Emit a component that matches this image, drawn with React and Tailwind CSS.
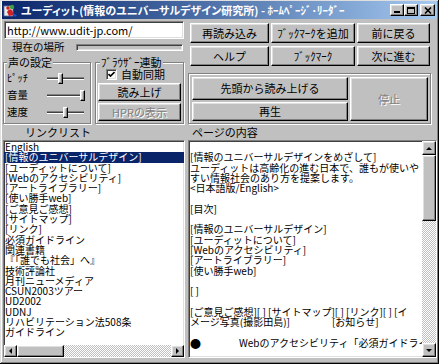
import React from 'react';

const raised =
  'border border-t-white border-l-white border-r-black border-b-black shadow-[inset_-1px_-1px_#808080,inset_1px_1px_#dfdfdf]';
const sunken =
  'border border-t-[#808080] border-l-[#808080] border-r-white border-b-white shadow-[inset_1px_1px_#404040,inset_-1px_-1px_#dfdfdf]';
const etched = 'border border-[#808080] shadow-[1px_1px_0_#fff,inset_1px_1px_0_#fff]';
const dither = 'bg-[repeating-conic-gradient(#ffffff_0%_25%,#c0c0c0_0%_50%)] bg-[length:2px_2px]';

const Btn = ({ className = '', disabled, children }) => (
  <button
    className={`${raised} bg-[#c0c0c0] flex items-center justify-center text-[11px] leading-none whitespace-nowrap ${
      disabled ? 'text-[#808080] [text-shadow:1px_1px_0_#fff]' : 'text-black'
    } ${className}`}
  >
    {children}
  </button>
);

const Arrow = ({ dir }) => {
  const pts = {
    up: '1,4 4,1 7,4',
    down: '1,1 4,4 7,1',
    left: '4,1 1,4 4,7',
    right: '1,1 4,4 1,7',
  }[dir];
  const vertical = dir === 'up' || dir === 'down';
  return (
    <svg width={vertical ? 8 : 5} height={vertical ? 5 : 8} viewBox={vertical ? '0 0 8 5' : '0 0 5 8'}>
      <polygon points={pts} fill="#000" />
    </svg>
  );
};

const Slider = ({ pos, className = '' }) => (
  <div className={`relative h-[17px] ${className}`}>
    <div className="absolute left-0 right-0 top-[7px] h-[3px] border-t border-t-[#808080] border-b border-b-white bg-[#404040]" />
    <div className={`absolute top-[3px] w-[5px] h-[11px] bg-[#c0c0c0] ${raised}`} style={{ left: pos }} />
  </div>
);

const TitleIcon = () => (
  <svg width="15" height="15" viewBox="0 0 15 15">
    <rect x="1" y="3" width="9" height="10" fill="#e8e8e8" stroke="#6070a0" strokeWidth="0.8" />
    <circle cx="9" cy="4" r="2.2" fill="#3aa040" />
    <path d="M4 9 Q6 5 9 7 L11 12 L6 13 Z" fill="#d02020" />
    <circle cx="5" cy="5" r="1.8" fill="#d02020" />
    <path d="M9 10 L14 12 L12 14 Z" fill="#2050c0" />
  </svg>
);

const linkItems = [
  'English',
  '[情報のユニバーサルデザイン]',
  '[ユーディットについて]',
  '[Webのアクセシビリティ]',
  '[アートライブラリー]',
  '[使い勝手web]',
  '[ご意見ご感想]',
  '[サイトマップ]',
  '[リンク]',
  '必須ガイドライン',
  '関連書籍',
  '『「誰でも社会」へ』',
  '技術評論社',
  '月刊ニューメディア',
  'CSUN2003ツアー',
  'UD2002',
  'UDNJ',
  'リハビリテーション法508条',
  'ガイドライン',
];

const pageLines = [
  '',
  '[情報のユニバーサルデザインをめざして]',
  'ユーディットは高齢化の進む日本で、誰もが使いや',
  'すい情報社会のあり方を提案します。',
  '<日本語版/English>',
  '',
  '[目次]',
  '',
  '[情報のユニバーサルデザイン]',
  '[ユーディットについて]',
  '[Webのアクセシビリティ]',
  '[アートライブラリー]',
  '[使い勝手web]',
  '',
  '[ ]',
  '',
  '[ご意見ご感想][ ] [サイトマップ][ ] [リンク][ ] [イ',
];

export default function App() {
  return (
    <div className="w-[439px] h-[364px] bg-[#c0c0c0] flex flex-col px-[2px] pt-[1px] overflow-hidden shadow-[inset_-1px_-1px_#000,inset_1px_1px_#dfdfdf,inset_-2px_-2px_#808080,inset_2px_2px_#fff] font-['Noto_Sans_CJK_JP','Noto_Sans',sans-serif] text-black">
      {/* Title bar */}
      <div className="h-[18px] flex items-center bg-gradient-to-r from-[#0a246a] to-[#a6caf0] px-[1px]">
        <TitleIcon />
        <span className="ml-[3px] text-white font-bold text-[11px] leading-none whitespace-nowrap [font-feature-settings:'palt']">
          ユーディット(情報のユニバーサルデザイン研究所) - ﾎｰﾑﾍﾟｰｼﾞ･ﾘｰﾀﾞｰ
        </span>
        <div className="ml-auto flex items-center pr-[1px]">
          <button className={`${raised} bg-[#c0c0c0] w-[14px] h-[12px] flex items-end justify-center pb-[2px]`}>
            <div className="w-[6px] h-[2px] bg-black" />
          </button>
          <button className={`${raised} bg-[#c0c0c0] w-[14px] h-[12px] flex items-center justify-center`}>
            <div className="w-[8px] h-[7px] border border-black border-t-2" />
          </button>
          <button className={`${raised} bg-[#c0c0c0] w-[15px] h-[12px] ml-[2px] flex items-center justify-center`}>
            <svg width="8" height="7" viewBox="0 0 8 7">
              <path d="M1 0.5 L7 6.5 M7 0.5 L1 6.5" stroke="#000" strokeWidth="1.6" />
            </svg>
          </button>
        </div>
      </div>

      {/* Upper controls */}
      <div className="flex">
        <div className="w-[182px] ml-[1px] flex flex-col">
          <div className={`${sunken} bg-white mt-[2px] ml-[1px] w-[180px] h-[18px] flex items-center px-[2px] text-[11px] leading-none`}>
            http://www.udit-jp.com/
          </div>
          <div className="mt-[2px] h-[12px] flex items-center">
            <span className="pl-[9px] w-[73px] text-[10.5px] leading-none">現在の場所</span>
            <div className={`${sunken} w-[107px] h-[7px] bg-[#c0c0c0]`} />
          </div>
          <div className="mt-[9px] h-[62px] flex gap-[4px]">
            <div className={`relative ${etched} w-[88px] h-full flex flex-col pt-[7px]`}>
              <span className="absolute -top-[7px] left-[3px] px-[1px] bg-[#c0c0c0] text-[11px] leading-[13px]">声の設定</span>
              {[
                ['ﾋﾟｯﾁ', 11],
                ['音量', 33],
                ['速度', 16],
              ].map(([label, pos]) => (
                <div key={label} className="flex items-center h-[17px]">
                  <span className="pl-[3px] w-[43px] text-[10.5px] leading-none">{label}</span>
                  <Slider pos={pos} className="w-[37px]" />
                </div>
              ))}
            </div>
            <div className={`relative ${etched} w-[89px] h-full flex flex-col pt-[5px] pl-[2px]`}>
              <span className="absolute -top-[7px] left-[4px] px-[1px] bg-[#c0c0c0] text-[11px] leading-[13px]">ﾌﾞﾗｳｻﾞｰ連動</span>
              <div className="h-[12px] flex items-center pl-[8px] gap-[4px]">
                <div className={`${sunken} w-[11px] h-[11px] bg-white flex items-center justify-center`}>
                  <svg width="7" height="7" viewBox="0 0 7 7">
                    <path d="M0.5 3 L2.5 5 L6.5 1" stroke="#000" strokeWidth="1.6" fill="none" />
                  </svg>
                </div>
                <span className="text-[11px] leading-none">自動同期</span>
              </div>
              <Btn className="mt-[3px] w-[83px] h-[18px]">読み上げ</Btn>
              <Btn className="mt-[2px] w-[83px] h-[18px]" disabled>HPRの表示</Btn>
            </div>
          </div>
        </div>

        <div className="ml-[3px] w-[249px] flex flex-col">
          <div className="mt-[4px] ml-[2px] grid grid-cols-[79px_84px_73px] grid-rows-[20px_20px] gap-[2px] gap-y-[3px]">
            <Btn>再読み込み</Btn>
            <Btn>ﾌﾞｯｸﾏｰｸを追加</Btn>
            <Btn>前に戻る</Btn>
            <Btn>ヘルプ</Btn>
            <Btn>ﾌﾞｯｸﾏｰｸ</Btn>
            <Btn>次に進む</Btn>
          </div>
          <div className={`${etched} mt-[7px] w-[243px] h-[51px] flex gap-[2px] pt-[3px] pl-[3px] pr-[2px]`}>
            <div className="w-[156px] flex flex-col gap-[2px]">
              <Btn className="h-[23px]">先頭から読み上げる</Btn>
              <Btn className="h-[19px]">再生</Btn>
            </div>
            <Btn className="flex-1 h-[44px]" disabled>停止</Btn>
          </div>
        </div>
      </div>

      {/* Labels */}
      <div className="h-[16px] flex items-center text-[11px] leading-none">
        <span className="w-[186px] pl-[23px]">リンクリスト</span>
        <span className="pl-[4px]">ページの内容</span>
      </div>

      {/* Lists */}
      <div className="flex h-[218px]">
        <div className={`${sunken} ml-[1px] w-[182px] h-full bg-white flex flex-col`}>
          <div className="flex-1 overflow-hidden pt-[1px] text-[10px] leading-[10.3px]">
            {linkItems.map((item, i) => (
              <div
                key={item}
                className={`whitespace-nowrap pl-[1px] ${i === 1 ? 'bg-[#0a246a] text-white' : ''}`}
              >
                {item}
              </div>
            ))}
          </div>
          <div className="h-[12px] flex">
            <div className={`${raised} bg-[#c0c0c0] w-[13px] flex items-center justify-center`}>
              <Arrow dir="left" />
            </div>
            <div className={`${raised} bg-[#c0c0c0] w-[47px]`} />
            <div className={`flex-1 ${dither}`} />
            <div className={`${raised} bg-[#c0c0c0] w-[13px] flex items-center justify-center`}>
              <Arrow dir="right" />
            </div>
          </div>
        </div>

        <div className={`${sunken} ml-[3px] w-[249px] h-full bg-white flex`}>
          <div className="flex-1 overflow-hidden pl-[1px] pt-[1px] text-[10px] leading-[10.3px]">
            {pageLines.map((line, i) => (
              <div key={i} className="whitespace-nowrap h-[10.3px]">
                {line}
              </div>
            ))}
            <div className="whitespace-nowrap h-[10.3px]">
              メージ写真(撮影田島)]<span className="inline-block ml-[42px]">[お知らせ]</span>
            </div>
            <div className="h-[10.3px]" />
            <div className="whitespace-nowrap h-[10.3px] flex items-center">
              <span className="text-[11px]">●</span>
              <span className="ml-[38px]">Webのアクセシビリティ「必須ガイドライン」</span>
            </div>
          </div>
          <div className="w-[14px] flex flex-col">
            <div className={`${raised} bg-[#c0c0c0] h-[14px] flex items-center justify-center`}>
              <Arrow dir="up" />
            </div>
            <div className={`${raised} bg-[#c0c0c0] h-[66px]`} />
            <div className={`flex-1 ${dither}`} />
            <div className={`${raised} bg-[#c0c0c0] h-[14px] flex items-center justify-center`}>
              <Arrow dir="down" />
            </div>
          </div>
        </div>
      </div>
    </div>
  );
}
